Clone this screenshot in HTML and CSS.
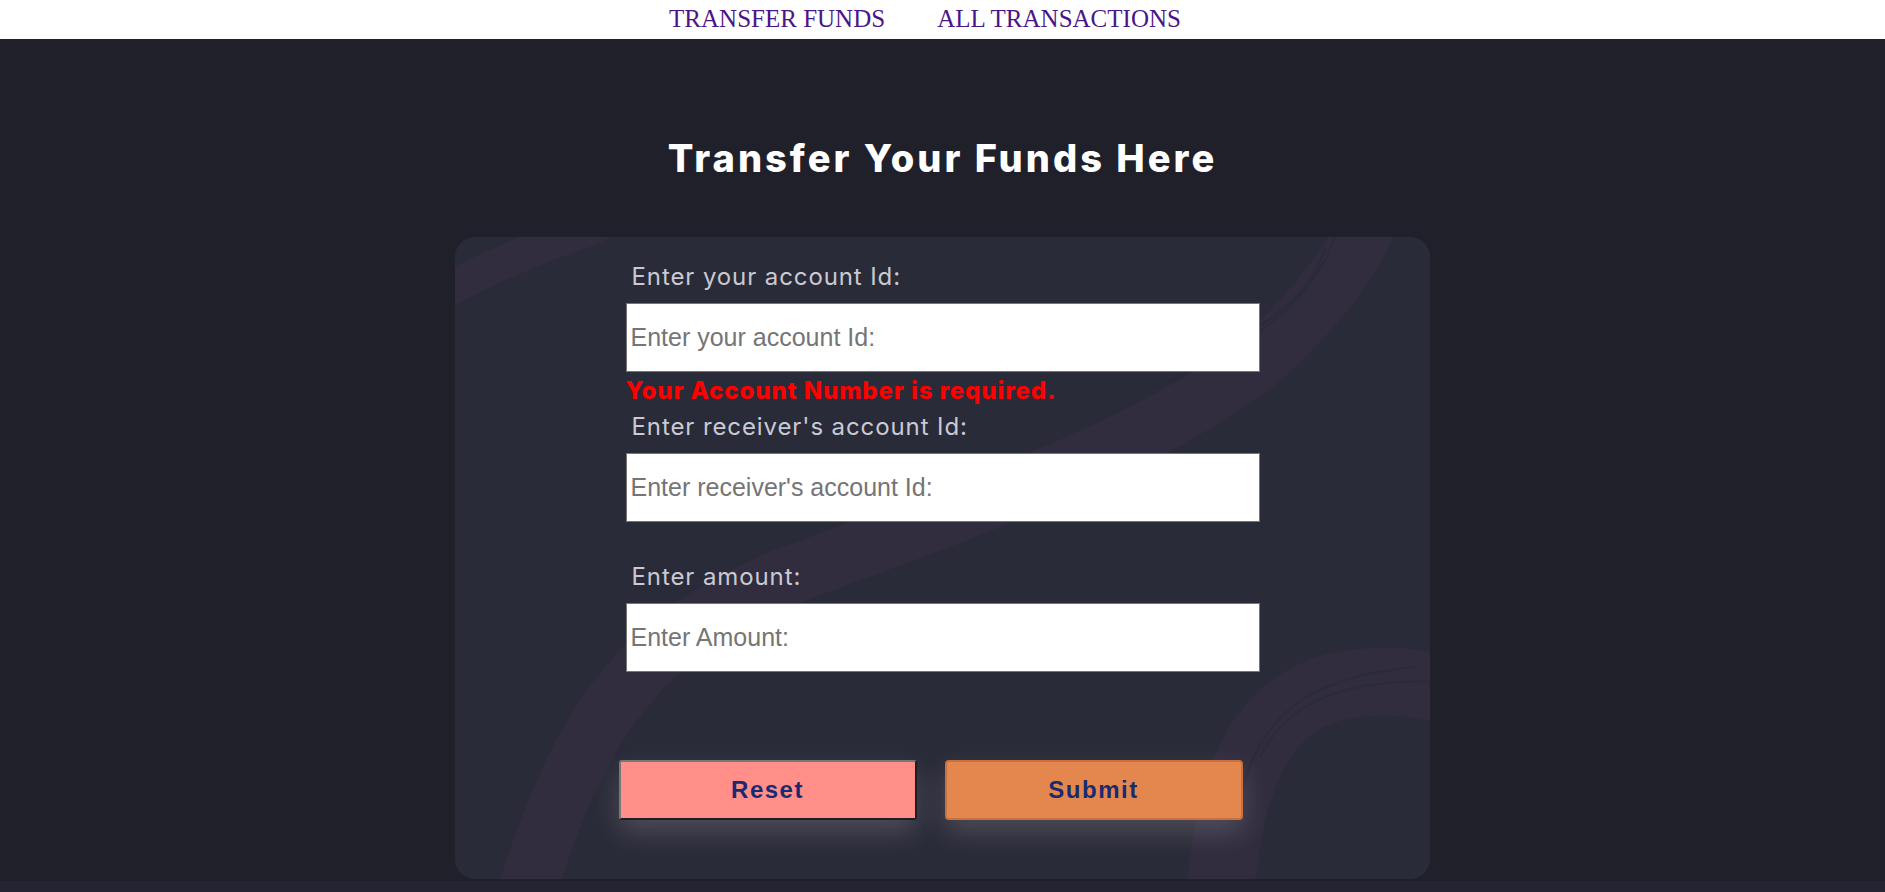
FILE: index.html
```html
<!DOCTYPE html>
<html lang="en">
<head>
<meta charset="utf-8">
<title>Transfer Funds</title>
<link rel="stylesheet" href="styles.css">
</head>
<body>
<nav class="topnav">
  <a class="topnav-link" href="#">TRANSFER FUNDS</a>
  <a class="topnav-link" href="#">ALL TRANSACTIONS</a>
</nav>
<main class="page">
  <h1 class="page-title">Transfer Your Funds Here</h1>
  <section class="card">
    <svg class="card-deco" viewBox="0 0 975 642" preserveAspectRatio="none" aria-hidden="true">
      <path class="brush" d="M -20 60 Q 50 20 140 -10" stroke-width="34"/>
      <path class="brush" d="M 70 660 C 130 470 190 400 330 340 C 520 270 720 200 820 110 C 870 60 900 20 915 -20" stroke-width="58"/>
      <path class="brush-line" d="M 700 150 C 800 110 860 60 880 0"/>
      <path class="brush-line" d="M 740 120 C 820 90 860 50 870 10"/>
      <path class="brush" d="M 765 660 C 775 540 805 470 880 450 C 930 440 960 445 1000 455" stroke-width="68"/>
      <path class="brush-line" d="M 785 560 C 805 480 850 440 960 430"/>
      <path class="brush-line" d="M 805 520 C 830 470 880 440 990 445"/>
    </svg>
    <form class="transfer-form">
      <div class="field">
        <label class="field-label" for="from">Enter your account Id:</label>
        <input class="field-input" id="from" type="text" placeholder="Enter your account Id:">
        <div class="field-error">Your Account Number is required.</div>
      </div>
      <div class="field">
        <label class="field-label" for="to">Enter receiver's account Id:</label>
        <input class="field-input" id="to" type="text" placeholder="Enter receiver's account Id:">
        <div class="field-error"></div>
      </div>
      <div class="field">
        <label class="field-label" for="amount">Enter amount:</label>
        <input class="field-input" id="amount" type="text" placeholder="Enter Amount:">
        <div class="field-error"></div>
      </div>
      <div class="actions">
        <button class="btn btn-reset" type="reset">Reset</button>
        <button class="btn btn-submit" type="submit">Submit</button>
      </div>
    </form>
  </section>
</main>
</body>
</html>
```

FILE: styles.css
```css
html {
  background: #242433;
}

body {
  margin: 0;
  font-family: "Inter", "Noto Sans", sans-serif;
}

.topnav {
  background: #ffffff;
  height: 39px;
  display: flex;
  justify-content: center;
  gap: 52px;
  padding-right: 35px;
}

.topnav-link {
  font-family: "Liberation Serif", "Times New Roman", serif;
  font-size: 25px;
  line-height: 37px;
  color: #4b1588;
  text-decoration: none;
}

.page {
  background: #20202a;
  padding: 97px 0 2px;
}

.page-title {
  margin: 0 0 56px;
  text-align: center;
  color: #ffffff;
  font-family: "Inter", sans-serif;
  font-weight: 800;
  font-size: 38px;
  line-height: 45px;
  letter-spacing: 3px;
}

.card {
  position: relative;
  width: 975px;
  height: 642px;
  box-sizing: border-box;
  margin: 0 auto;
  background: #2a2b38;
  border-radius: 20px;
  overflow: hidden;
  padding-top: 24px;
}

.card-deco {
  position: absolute;
  left: 0;
  top: 0;
  width: 100%;
  height: 100%;
}

.brush {
  fill: none;
  stroke: #312d3f;
  stroke-linecap: round;
}

.brush-line {
  fill: none;
  stroke: #2a2a38;
  stroke-width: 2;
  opacity: 0.7;
}

.transfer-form {
  position: relative;
  width: 634px;
  margin: 0 auto;
}

.field {
  display: flex;
  flex-direction: column;
}

.field-label {
  color: #c9cad3;
  font-size: 24px;
  line-height: 28px;
  letter-spacing: 0.9px;
  padding-left: 6px;
  padding-top: 2px;
  margin-bottom: 12px;
}

.field-input {
  box-sizing: border-box;
  height: 69px;
  width: 100%;
  margin: 0;
  border: 1px solid #767676;
  border-radius: 0;
  background: #ffffff;
  padding: 0 4px;
  font-family: "Liberation Sans", Arial, sans-serif;
  font-size: 25px;
  color: #222;
}

.field-input::placeholder {
  color: #757575;
}

.field-error {
  height: 39px;
  box-sizing: border-box;
  padding-top: 5px;
  color: #ff0000;
  font-weight: 800;
  font-size: 24px;
  line-height: 28px;
  letter-spacing: 0.9px;
}

.actions {
  display: flex;
  justify-content: center;
  gap: 28px;
  margin-top: 49px;
  margin-left: -14px;
  margin-right: 10px;
}

.btn {
  width: 298px;
  height: 60px;
  box-sizing: border-box;
  font-family: "Liberation Sans", Arial, sans-serif;
  font-weight: 700;
  font-size: 24px;
  letter-spacing: 1.5px;
  color: #1a2a72;
  border-radius: 3px;
  box-shadow: 0 12px 28px rgba(255, 255, 255, 0.16);
  cursor: pointer;
}

.btn-reset {
  background: #ff8f88;
  border: 2px solid;
  border-color: #777777 #1e1e24 #1e1e24 #777777;
}

.btn-submit {
  background: #e4874f;
  border: 2px solid #c8703f;
  border-radius: 4px;
}
```
